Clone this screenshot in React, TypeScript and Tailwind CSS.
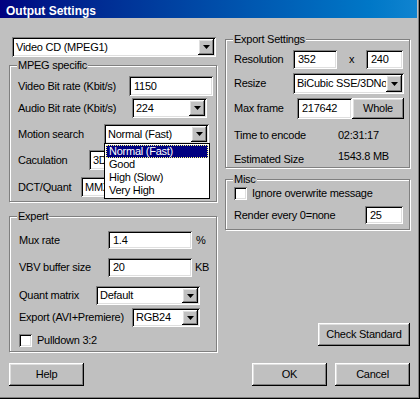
import React from "react";

const sunken =
  "bg-white shadow-[inset_1px_1px_0_#808080,inset_-1px_-1px_0_#fff,inset_2px_2px_0_#000,inset_-2px_-2px_0_#dfdfdf]";
const raised =
  "bg-[#c0c0c0] shadow-[inset_-1px_-1px_0_#000,inset_1px_1px_0_#fff,inset_-2px_-2px_0_#808080,inset_2px_2px_0_#dfdfdf]";
const etched = "border border-[#808080] shadow-[inset_1px_1px_0_#fff,1px_1px_0_#fff]";

const Arrow = () => (
  <svg width="7" height="4" viewBox="0 0 7 4">
    <polygon points="0,0 7,0 3.5,4" fill="#000" />
  </svg>
);

const Field = ({ value, className = "" }: { value: string; className?: string }) => (
  <div className={`flex items-center overflow-hidden whitespace-nowrap pl-[5px] ${sunken} ${className}`}>{value}</div>
);

const Combo = ({ value, className = "" }: { value: string; className?: string }) => (
  <div className={`flex items-center ${sunken} ${className}`}>
    <span className="flex-1 overflow-hidden whitespace-nowrap pl-[4px]">{value}</span>
    <div className={`mr-[2px] flex h-[calc(100%-4px)] w-[16px] shrink-0 items-center justify-center ${raised}`}>
      <Arrow />
    </div>
  </div>
);

const Button = ({ label, className = "" }: { label: string; className?: string }) => (
  <div className={`flex h-[23px] items-center justify-center ${raised} ${className}`}>{label}</div>
);

const Check = () => <div className={`h-[13px] w-[13px] shrink-0 ${sunken}`} />;

const Group = ({ title, className = "", children }: { title: string; className?: string; children: React.ReactNode }) => (
  <div className={`relative flex flex-col ${etched} ${className}`}>
    <span className="absolute left-[7px] top-[-7px] bg-[#c0c0c0] px-[1px]">{title}</span>
    {children}
  </div>
);

export default function App() {
  const motionOptions = ["Normal (Fast)", "Good", "High (Slow)", "Very High"];

  return (
    <div className="flex h-[399px] w-[420px] flex-col bg-[#c0c0c0] font-['Liberation_Sans',Arial,sans-serif] text-[11px] leading-[13px] tracking-[-0.25px] text-black shadow-[inset_-1px_-1px_0_#000,inset_-2px_-2px_0_#808080]">
      {/* title bar */}
      <div className="h-[18px] w-[417px] bg-linear-to-r from-[#000080] to-[#1084d0] pl-[6px] pt-[4px] text-[12px] font-bold leading-[14px] tracking-normal text-white">
        Output Settings
      </div>

      <div className="flex pl-[9px]">
        {/* left column */}
        <div className="flex w-[208px] flex-col">
          <Combo value="Video CD (MPEG1)" className="ml-[3px] mt-[19px] h-[20px] w-[204px]" />

          <Group title="MPEG specific" className="mt-[8px] h-[137px] pl-[8px]">
            <div className="mt-[10px] flex h-[20px] items-center">
              <span className="w-[111px]">Video Bit rate (Kbit/s)</span>
              <Field value="1150" className="h-full w-[84px]" />
            </div>
            <div className="mt-[2px] flex h-[20px] items-center">
              <span className="w-[114px]">Audio Bit rate (Kbit/s)</span>
              <Combo value="224" className="h-full w-[75px]" />
            </div>
            <div className="mt-[6px] flex h-[20px] items-center">
              <span className="w-[86px]">Motion search</span>
              <div className="relative h-full w-[105px]">
                <Combo value="Normal (Fast)" className="h-full w-full" />
                <div className="absolute left-0 top-[19px] z-10 flex w-[106px] flex-col border border-black bg-white p-[1px]">
                  {motionOptions.map((opt, i) => (
                    <div
                      key={opt}
                      className={
                        i === 0
                          ? "h-[13px] border border-dotted border-[#ffff7f] bg-[#000080] pl-[2px] leading-[11px] text-white"
                          : "h-[13px] pl-[3px]"
                      }
                    >
                      {opt}
                    </div>
                  ))}
                </div>
              </div>
            </div>
            <div className="mt-[6px] flex h-[20px] items-center">
              <span className="w-[71px]">Caculation</span>
              <Combo value="3DNow!" className="h-full w-[120px]" />
            </div>
            <div className="mt-[7px] flex h-[20px] items-center">
              <span className="w-[63px]">DCT/Quant</span>
              <Combo value="MMX" className="h-full w-[128px]" />
            </div>
          </Group>

          <Group title="Expert" className="mt-[14px] h-[136px] pl-[9px]">
            <div className="mt-[14px] flex h-[18px] items-center">
              <span className="w-[89px]">Mux rate</span>
              <Field value="1.4" className="h-full w-[84px]" />
              <span className="ml-[4px]">%</span>
            </div>
            <div className="mt-[9px] flex h-[19px] items-center">
              <span className="w-[89px]">VBV buffer size</span>
              <Field value="20" className="h-full w-[84px]" />
              <span className="ml-[3px]">KB</span>
            </div>
            <div className="mt-[9px] flex h-[19px] items-center">
              <span className="w-[77px]">Quant matrix</span>
              <Combo value="Default" className="h-full w-[104px]" />
            </div>
            <div className="mt-[3px] flex h-[19px] items-center">
              <span className="w-[113px]">Export (AVI+Premiere)</span>
              <Combo value="RGB24" className="h-full w-[68px]" />
            </div>
            <div className="mt-[7px] flex h-[13px] items-center">
              <Check />
              <span className="ml-[5px]">Pulldown 3:2</span>
            </div>
          </Group>

          <Button label="Help" className="mt-[11px] w-[75px]" />
        </div>

        {/* right column */}
        <div className="ml-[8px] flex w-[185px] flex-col">
          <Group title="Export Settings" className="mt-[21px] h-[129px] pl-[8px]">
            <div className="mt-[10px] flex h-[19px] items-center">
              <span className="w-[59px]">Resolution</span>
              <Field value="352" className="h-full w-[44px]" />
              <span className="flex w-[29px] justify-center">x</span>
              <Field value="240" className="h-full w-[37px]" />
            </div>
            <div className="mt-[4px] flex h-[21px] items-center">
              <span className="w-[59px]">Resize</span>
              <Combo value="BiCubic SSE/3DNow!" className="h-full w-[111px]" />
            </div>
            <div className="mt-[4px] flex h-[21px] items-center">
              <span className="w-[63px]">Max frame</span>
              <Field value="217642" className="h-full w-[55px]" />
              <Button label="Whole" className="ml-[0px] h-full w-[52px]" />
            </div>
            <div className="mt-[10px] flex h-[13px] items-center">
              <span className="w-[104px]">Time to encode</span>
              <span>02:31:17</span>
            </div>
            <div className="mt-[8px] flex h-[16px] items-start">
              <span className="w-[104px] pt-[3px]">Estimated Size</span>
              <span>1543.8 MB</span>
            </div>
          </Group>

          <Group title="Misc" className="mt-[11px] h-[51px] pl-[8px]">
            <div className="mt-[7px] flex h-[13px] items-center">
              <Check />
              <span className="ml-[5px]">Ignore overwrite message</span>
            </div>
            <div className="mt-[6px] flex h-[18px] items-center">
              <span className="w-[131px]">Render every 0=none</span>
              <Field value="25" className="h-full w-[38px]" />
            </div>
          </Group>

          <Button label="Check Standard" className="ml-[93px] mt-[93px] w-[92px]" />

          <div className="mt-[17px] flex">
            <Button label="OK" className="ml-[27px] w-[75px]" />
            <Button label="Cancel" className="ml-[8px] w-[75px]" />
          </div>
        </div>
      </div>
    </div>
  );
}
